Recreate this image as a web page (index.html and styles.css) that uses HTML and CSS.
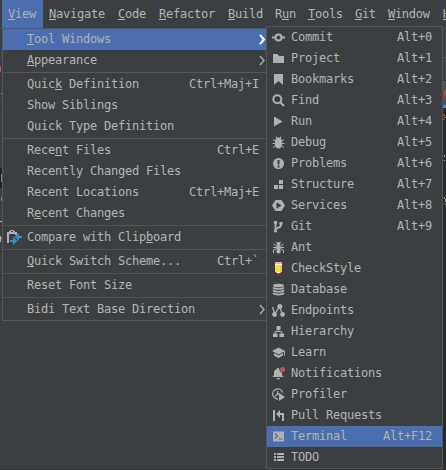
FILE: index.html
```
<!DOCTYPE html>
<html lang="en">
<head>
<meta charset="utf-8">
<title>View menu</title>
<link rel="stylesheet" href="styles.css">
</head>
<body>
<div class="window">
  <nav class="menubar">
    <span class="top active"><u>V</u>iew</span><span class="top"><u>N</u>avigate</span><span class="top"><u>C</u>ode</span><span class="top"><u>R</u>efactor</span><span class="top tight"><u>B</u>uild</span><span class="top tight">R<u>u</u>n</span><span class="top tight"><u>T</u>ools</span><span class="top tight"><u>G</u>it</span><span class="top"><u>W</u>indow</span><span class="top"><u>H</u>elp</span>
  </nav>
  <div class="workspace">
    <svg class="behind" width="446" height="442" viewBox="0 28 446 442" shape-rendering="crispEdges">
      <path fill="#2b2b2b" d="M443 108h3v361h-3z"/>
      <path fill="#515355" d="M0 28h3v1H0zM0 57h3v1H0zM443 28h3v1h-3zM443 57h3v1h-3z"/>
      <path fill="#303234" d="M0 80h3v1H0zM0 107h3v1H0zM443 80h3v1h-3zM0 469h446v1H0z"/>
      <path fill="#4e5254" d="M443 81h3v24h-3z"/>
      <path fill="#4a88c7" d="M443 105h3v3h-3z"/>
      <path fill="#c75450" d="M0 66h1v6H0zM444 92h1v5h-1zM445 90h1v4h-1z"/>
      <path fill="#0d293e" d="M0 168h2v20H0z"/>
      <path fill="#a8716b" d="M1 174h1v8H1zM1 197h1v4H1z"/>
      <path fill="#aaa" d="M1 93h1v1H1zM0 221h2v1H0zM0 236h1v6H0zM1 238h1v1H1zM444 155h1v2h-1zM444 160h1v1h-1zM444 197h1v2h-1zM445 199h1v3h-1z"/>
      <path fill="#cc7832" d="M443 115h2v1h-2zM444 117h2v1h-2zM443 119h1v1h-1z"/>
      <path fill="#568a4e" d="M444 203h1v1h-1zM445 204h1v1h-1z"/>
    </svg>
    <section class="menu view-menu">
      <div class="row selected"><span><u>T</u>ool Windows</span><svg class="arrow" viewBox="0 0 7 11"><path d="M1 1l4 4.5L1 10"/></svg></div>
      <div class="row"><span><u>A</u>ppearance</span><svg class="arrow" viewBox="0 0 7 11"><path d="M1 1l4 4.5L1 10"/></svg></div>
      <hr>
      <div class="row"><span>Quic<u>k</u> Definition</span><span class="key">Ctrl+Maj+I</span></div>
      <div class="row"><span>Show Siblings</span></div>
      <div class="row"><span>Quick Type Definition</span></div>
      <hr>
      <div class="row"><span>Rece<u>n</u>t Files</span><span class="key">Ctrl+E</span></div>
      <div class="row"><span>Recently Changed Files</span></div>
      <div class="row"><span>Recent Locations</span><span class="key">Ctrl+Maj+E</span></div>
      <div class="row"><span>R<u>e</u>cent Changes</span></div>
      <hr>
      <div class="row with-icon"><svg class="clip" viewBox="0 0 16 16"><path fill="#afb1b3" d="M1 2h2V1h1V0h4v1h1v1h2v3H9V4H3v9H1zM5 1v1h2V1z" fill-rule="evenodd"/><path fill="#3592c4" d="M16 6v2h-3v3L8.500 7 13 3v3zM4 10h3V7l4.500 4L7 15v-3H4z"/></svg><span>Compare with Clip<u>b</u>oard</span></div>
      <hr>
      <div class="row"><span><u>Q</u>uick Switch Scheme...</span><span class="key">Ctrl+`</span></div>
      <hr>
      <div class="row"><span>Reset Font Size</span></div>
      <hr>
      <div class="row"><span>Bidi Text Base Direction</span><svg class="arrow" viewBox="0 0 7 11"><path d="M1 1l4 4.500L1 10"/></svg></div>
    </section>
    <section class="menu tool-menu">
      <div class="row"><svg class="icon" viewBox="0 0 13 13"><path d="M0 5.500h3v2H0zM10 5.500h3v2h-3z"/><circle class="line" cx="6.500" cy="6.500" r="3" stroke-width="2"/></svg><span>Commit</span><span class="key">Alt+0</span></div>
      <div class="row"><svg class="icon" viewBox="0 0 13 13"><path d="M1 2h4.500L7 4h5v7H1z"/></svg><span>Project</span><span class="key">Alt+1</span></div>
      <div class="row"><svg class="icon" viewBox="0 0 13 13"><path d="M2 1h9v11L6.500 8 2 12z"/></svg><span>Bookmarks</span><span class="key">Alt+2</span></div>
      <div class="row"><svg class="icon" viewBox="0 0 13 13"><circle class="line" cx="5.300" cy="5.300" r="4" stroke-width="2"/><path class="line" d="M8 8l4 4" stroke-width="2.200"/></svg><span>Find</span><span class="key">Alt+3</span></div>
      <div class="row"><svg class="icon" viewBox="0 0 13 13"><path d="M2 1.500l8.500 5-8.500 5z"/></svg><span>Run</span><span class="key">Alt+4</span></div>
      <div class="row"><svg class="icon" viewBox="0 0 13 13"><path d="M3.500 3.500C4 2 5 1.500 6.500 1.500S9 2 9.500 3.500L10 6v3c0 2-1.500 3.500-3.500 3.500S3 11 3 9V6z"/><path class="line" d="M4 .5l1 2M9 .5l-1 2M1 3.500l2 1.500h7l2-1.500M.5 7.500h12M1 11.500l2.500-2h6l2.500 2"/></svg><span>Debug</span><span class="key">Alt+5</span></div>
      <div class="row"><svg class="icon" viewBox="0 0 13 13"><path fill-rule="evenodd" d="M6.500 1a5.500 5.500 0 1 0 0 11 5.500 5.500 0 0 0 0-11zM5.500 3h2v4.500h-2zM5.500 8.500h2v2h-2z"/></svg><span>Problems</span><span class="key">Alt+6</span></div>
      <div class="row"><svg class="icon" viewBox="0 0 13 13"><path d="M7 2h4v4H7zM2 7h4v4H2zM7 7h4v4H7z"/></svg><span>Structure</span><span class="key">Alt+7</span></div>
      <div class="row"><svg class="icon" viewBox="0 0 13 13"><path fill-rule="evenodd" d="M3.500 1h6L13 6.500 9.500 12h-6L0 6.500zM4.500 3.200v6.600l5-3.300z"/></svg><span>Services</span><span class="key">Alt+8</span></div>
      <div class="row"><svg class="icon" viewBox="0 0 13 13"><path class="line" stroke-width="1.800" d="M3.500 2v10M9 3.500V5Q9 7 6.500 7.500L4 9"/><circle cx="3.500" cy="2.500" r="1.800"/><circle cx="9" cy="3.500" r="1.800"/><circle cx="3.500" cy="11" r="1.600"/></svg><span>Git</span><span class="key">Alt+9</span></div>
      <div class="row"><svg class="icon" viewBox="0 0 13 13"><circle cx="6.500" cy="3" r="2"/><ellipse cx="6.500" cy="6" rx="1.600" ry="2"/><ellipse cx="6.500" cy="10" rx="2.200" ry="2.600"/><path class="line" d="M4 .5l2 2M9 .5l-2 2M1.500 2.500l2 2.500 6 0 2-2.500M1 6.500h11M1.500 12V9L5 7.500h3L11.500 9v3"/></svg><span>Ant</span></div>
      <div class="row"><svg class="icon" viewBox="0 0 13 13" shape-rendering="crispEdges"><path fill="#f4a5ad" d="M3 0h7v2H3z"/><path fill="#fff" d="M3 2h7v1H3zM4 10h5v1H4z"/><path fill="#f9d84a" d="M3 3h7v7H3z"/><path fill="#ffc233" d="M8 3h2v7H8z"/><path fill="#ff9c78" d="M4 10h1v1H4zM8 10h1v1H8z"/><path fill="#e52b20" d="M5 11h3v1H7v1H6v-1H5z"/></svg><span>CheckStyle</span></div>
      <div class="row"><svg class="icon" viewBox="0 0 13 13"><ellipse cx="6.500" cy="2.500" rx="5.500" ry="1.800"/><path class="line" stroke-width="1.700" d="M1 4.500c1.500 2 9.500 2 11 0M1 7.300c1.500 2 9.500 2 11 0M1 10.100c1.500 2 9.500 2 11 0"/></svg><span>Database</span></div>
      <div class="row"><svg class="icon" viewBox="0 0 13 13"><path class="line" stroke-width="1.300" d="M.6 3l2 7L7.500 3l3 7"/><circle cx="7.800" cy="2.500" r="2.500"/><circle cx="2.500" cy="10.500" r="2.400"/><circle cx="10.500" cy="10.500" r="2.400"/></svg><span>Endpoints</span></div>
      <div class="row"><svg class="icon" viewBox="0 0 13 13"><path d="M4.500 1h4v4h-4zM1 8.500h4.500V12H1zM7.500 8.500H12V12H7.500z"/><path class="line" d="M6.500 4v3M3.200 9V6.500h6.600V9"/></svg><span>Hierarchy</span></div>
      <div class="row"><svg class="icon" viewBox="0 0 13 13"><path d="M6.500 1.500L13 5l-6.500 3.500L0 5zM2 7l4.500 2.500L11 7v2.500L6.500 12 2 9.500zM12 5h1v4.500h-1z"/></svg><span>Learn</span></div>
      <div class="row"><svg class="icon" viewBox="0 0 13 13"><path d="M5 1h2v1c2 .5 3 1.500 3 3.500V8l1.500 2H.5L2 8V5.500C2 3.500 3 2.500 5 2zM4.500 11h3.500c-.5 2-3 2-3.500 0z"/><circle cx="10.500" cy="2.500" r="3" fill="#3c3f41"/><circle cx="10.500" cy="2.500" r="2.500" fill="#c75450"/></svg><span>Notifications</span></div>
      <div class="row"><svg class="icon" viewBox="0 0 13 13"><path class="line" stroke-width="1.300" d="M6 11A5 5 0 1 1 10.500 4.500M3 8.500l2.500-2.500M5.500 3v3h2"/><path d="M7 5l6 4-6 4z"/></svg><span>Profiler</span></div>
      <div class="row"><svg class="icon" viewBox="0 0 13 13"><path d="M1 1h2v11H1zM10 5h2v7h-2zM7 4h5v2H7zM4 5l4-4v8z"/></svg><span>Pull Requests</span></div>
      <div class="row selected"><svg class="icon" viewBox="0 0 13 13"><path d="M1 1.500h11v10H1z"/><path d="M3 3.500L5.500 6 3 8.500M6.500 9h4" fill="none" stroke="#4b6eaf" stroke-width="1.200"/></svg><span>Terminal</span><span class="key">Alt+F12</span></div>
      <div class="row"><svg class="icon" viewBox="0 0 13 13" shape-rendering="crispEdges"><path d="M2 2h2v2H2zM5 2h7v2H5zM2 5h2v2H2zM5 5h7v2H5zM2 8h2v2H2zM5 8h7v2H5z"/></svg><span>TODO</span></div>
    </section>
  </div>
</div>
</body>
</html>
```
FILE: styles.css
```
* { box-sizing: border-box; }
body {
  margin: 0;
  background: #3c3f41;
  color: #b3b4b5;
  font: 12px/21px "DejaVu Sans Mono", "Liberation Mono", monospace;
  letter-spacing: -0.23px;
}
.window { width: 446px; height: 470px; overflow: hidden; }
u { text-decoration: underline; text-decoration-thickness: 1px; text-underline-offset: 1px; text-decoration-skip-ink: none; }
.menubar { display: flex; height: 28px; padding-left: 2px; line-height: 28px; white-space: nowrap; }
.top { padding: 0 7px 0 6px; }
.tight { padding-right: 6px; }
.active { background: #4b6eaf; }
.workspace { position: relative; height: 442px; }
.behind { display: block; }
.menu { position: absolute; background: #3c3f41; border: 1px solid #555759; }
.view-menu { left: 2px; top: 0; width: 265px; }
.tool-menu { left: 266px; top: -2px; width: 177px; }
.row { display: flex; align-items: center; height: 21px; white-space: pre; }
.view-menu .row { padding: 0 7px 0 24px; }
.tool-menu .row { padding: 0 10px 0 5px; }
.selected { background: #4b6eaf; }
.key { margin-left: auto; }
hr { height: 1px; margin: 1px 0; border: 0; background: #555759; }
.arrow { width: 7px; height: 11px; margin: 0 -7px 0 auto; fill: none; stroke: #a5a7a9; stroke-width: 1.5; }
.selected .arrow { stroke: #fff; stroke-width: 2; }
.view-menu .with-icon { padding-left: 3px; }
.clip { width: 16px; height: 16px; margin-right: 5px; }
.icon { width: 13px; height: 13px; margin-right: 6px; fill: #afb1b3; overflow: visible; }
.line { fill: none; stroke: #afb1b3; }
```
